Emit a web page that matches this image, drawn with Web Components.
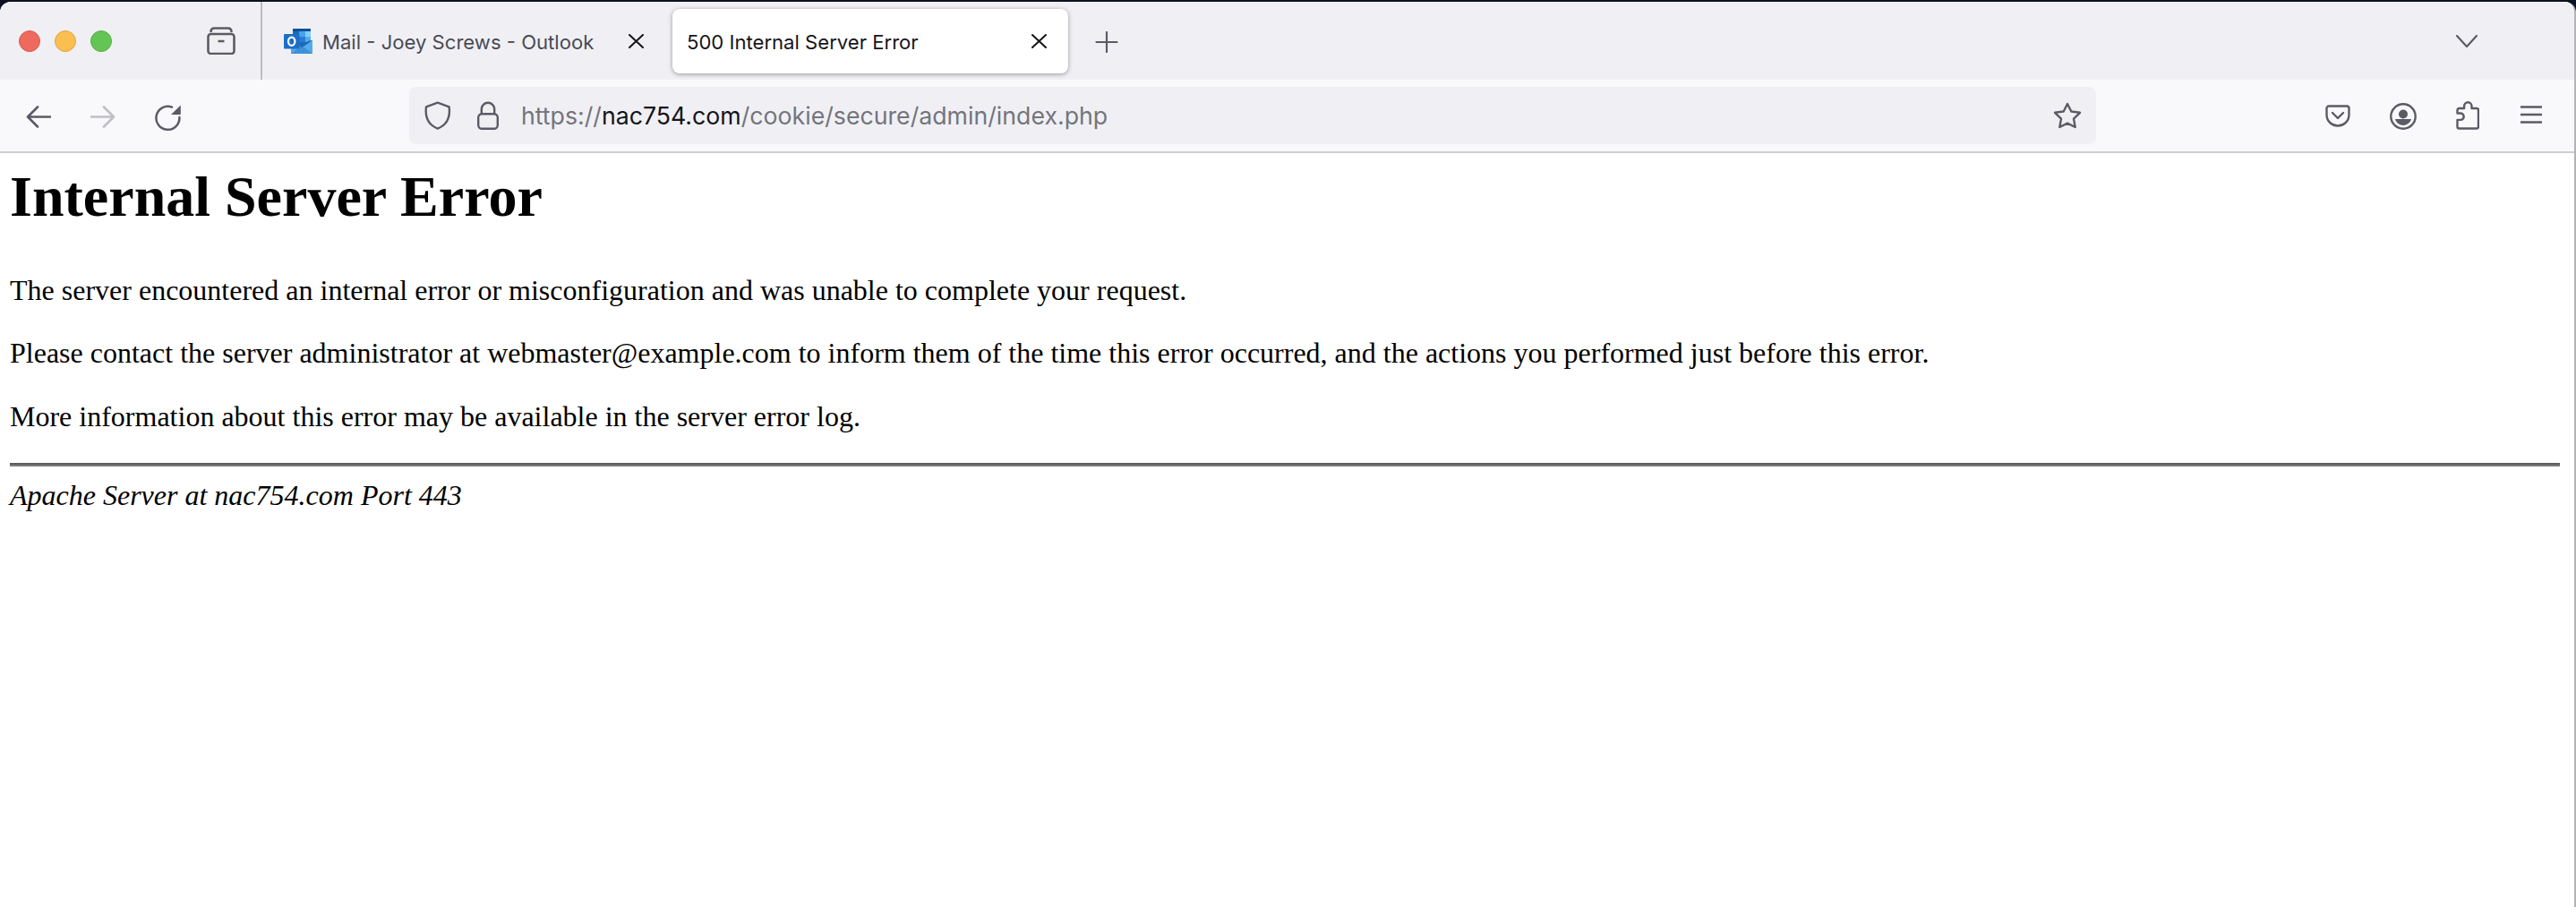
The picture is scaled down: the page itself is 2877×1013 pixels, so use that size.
<!DOCTYPE html>
<html lang="en">
<head>
<meta charset="utf-8">
<title>500 Internal Server Error</title>
<style>
  html, body { margin: 0; padding: 0; height: 100%; background: #0d1020; overflow: hidden; }
</style>
</head>
<body>
<browser-window>
  <tab-strip slot="tabs">
    <traffic-lights></traffic-lights>
    <tool-icon name="view" style="margin-left:106px"></tool-icon>
    <span class="sep" style="display:block;width:2px;height:87px;background:#bcbcc2;margin-left:28px;align-self:flex-end"></span>
    <browser-tab style="margin-left:6px;width:444px">
      <tool-icon slot="favicon" name="outlook"></tool-icon>
      Mail - Joey Screws - Outlook
    </browser-tab>
    <browser-tab active style="margin-left:7.5px;width:442.5px">500 Internal Server Error</browser-tab>
    <tool-icon name="plus" style="margin-left:30px;margin-top:3px"></tool-icon>
    <span style="flex:1"></span>
    <tool-icon name="chevron" style="margin-right:108px"></tool-icon>
  </tab-strip>
  <nav-bar slot="nav">
    <tool-icon name="back" style="margin-left:29px;margin-top:2px"></tool-icon>
    <tool-icon name="forward" style="margin-left:44px;margin-top:2px"></tool-icon>
    <tool-icon name="reload" style="margin-left:44px;margin-top:4px"></tool-icon>
    <url-bar scheme="https://" host="nac754.com" path="/cookie/secure/admin/index.php"></url-bar>
    <tool-icon name="pocket" style="margin-left:256px"></tool-icon>
    <tool-icon name="account" style="margin-left:44px;margin-top:2px"></tool-icon>
    <tool-icon name="extensions" style="margin-left:44px"></tool-icon>
    <tool-icon name="menu" style="margin-left:46px;margin-top:-2px"></tool-icon>
  </nav-bar>
  <server-error slot="page">
    <span slot="title">Internal Server Error</span>
    <p>The server encountered an internal error or misconfiguration and was unable to complete your request.</p>
    <p>Please contact the server administrator at webmaster@example.com to inform them of the time this error occurred, and the actions you performed just before this error.</p>
    <p>More information about this error may be available in the server error log.</p>
    <span slot="signature">Apache Server at nac754.com Port 443</span>
  </server-error>
</browser-window>

<script>
  const STROKE = "#5b5b66";

  // each icon is drawn in its own pixel box: [width, height, markup]
  const ICONS = {
    view: [32, 31, `
      <g fill="none" stroke="${STROKE}" stroke-width="2.6" stroke-linecap="round" stroke-linejoin="round">
        <path d="M4.5 5Q5 1.5 8 1.5H24Q27 1.5 27.5 5"/>
        <rect x="1.5" y="8" width="29" height="22" rx="3"/>
        <path d="M12.5 16H19.5" stroke-linecap="butt"/>
      </g>`],
    outlook: [32, 28, `
      <rect x="10" y="0" width="20" height="3" fill="#0f4f9a"/>
      <rect x="10" y="3" width="7" height="6" fill="#1a68bd"/>
      <rect x="17" y="3" width="7" height="6" fill="#4aa3e6"/>
      <rect x="24" y="3" width="6" height="6" fill="#7fd0f6"/>
      <rect x="10" y="9" width="7" height="6" fill="#15589f"/>
      <rect x="17" y="9" width="7" height="6" fill="#2a7cd3"/>
      <rect x="24" y="9" width="6" height="6" fill="#4fb0ec"/>
      <rect x="10" y="15" width="20" height="5" fill="#1c6cc0"/>
      <path d="M8 14L20 21L32 13V28H8Z" fill="#55aae8"/>
      <path d="M8 28L20 19L32 28Z" fill="#3d92da"/>
      <path d="M32 13L20 21L16 18.5L30 13Z" fill="#1e6bb8"/>
      <rect x="0" y="6" width="17.5" height="16.5" rx="1" fill="#1d6fc6"/>
      <ellipse cx="8.7" cy="14.2" rx="3.7" ry="4.6" fill="none" stroke="#fff" stroke-width="2.2"/>`],
    close: [17, 16, `
      <path d="M1 1L16 15M16 1L1 15" stroke="#15141a" stroke-width="2" fill="none" stroke-linecap="round"/>`],
    plus: [26, 24, `
      <path d="M13 1V23M1.5 12H24.5" stroke="${STROKE}" stroke-width="2.2" fill="none" stroke-linecap="round"/>`],
    chevron: [24, 14, `
      <path d="M1 1L12 13L23 1" stroke="${STROKE}" stroke-width="2.2" fill="none" stroke-linecap="round" stroke-linejoin="round"/>`],
    back: [28, 25, `
      <path d="M27 12.5H2.5M13 1.5L2 12.5L13 23.5" stroke="${STROKE}" stroke-width="2.6" fill="none" stroke-linecap="round" stroke-linejoin="round"/>`],
    forward: [28, 25, `
      <path d="M1 12.5H25.5M15 1.5L26 12.5L15 23.5" stroke="#bfbfc5" stroke-width="2.6" fill="none" stroke-linecap="round" stroke-linejoin="round"/>`],
    reload: [30, 29, `
      <path d="M19 2.6A13 13 0 1 0 27.4 14" stroke="${STROKE}" stroke-width="2.5" fill="none" stroke-linecap="round"/>
      <path d="M28.8 .6V11H18Z" fill="${STROKE}"/>`],
    shield: [30, 32, `
      <path d="M14.8 1.6L27.6 6.4C29.2 19 24 27 14.8 30.6C5.6 27 .4 19 2 6.4Z" stroke="${STROKE}" stroke-width="2.4" fill="none" stroke-linejoin="round"/>`],
    lock: [24, 32, `
      <g stroke="${STROKE}" stroke-width="2.4" fill="none">
        <rect x="1.2" y="14.2" width="21.6" height="16.6" rx="4"/>
        <path d="M4.8 14V9A7.2 7.2 0 0 1 19.2 9V14"/>
      </g>`],
    star: [32, 30, `
      <path d="M16 2L20.3 10.5L30 11.8L23 18.6L24.7 28L16 23.6L7.3 28L9 18.6L2 11.8L11.7 10.5Z" stroke="${STROKE}" stroke-width="2.4" fill="none" stroke-linejoin="round"/>`],
    pocket: [28, 25, `
      <g stroke="${STROKE}" stroke-width="2.4" fill="none" stroke-linecap="round" stroke-linejoin="round">
        <path d="M1.5 4A2.5 2.5 0 0 1 4 1.5H24A2.5 2.5 0 0 1 26.5 4V11C26.5 19 20 23.5 14 23.5C8 23.5 1.5 19 1.5 11Z"/>
        <path d="M8 9L14 15L20 9"/>
      </g>`],
    account: [30, 30, `
      <circle cx="15" cy="15" r="13.7" stroke="${STROKE}" stroke-width="2.4" fill="none"/>
      <circle cx="15" cy="12.5" r="5" fill="${STROKE}"/>
      <path d="M6 18H24C23 22 19 25 15 25C11 25 7 22 6 18Z" fill="${STROKE}"/>`],
    extensions: [26, 32, `
      <path d="M3.5 30.5H23A2 2 0 0 0 25 28.5V10A2 2 0 0 0 23 8H17.5V5.5A4.2 4.2 0 0 0 9.1 5.5V8H3.5A2 2 0 0 0 1.5 10V13.5H5A3.7 3.7 0 0 1 5 20.9H1.5V28.5A2 2 0 0 0 3.5 30.5Z" stroke="${STROKE}" stroke-width="2.4" fill="none" stroke-linejoin="round"/>`],
    menu: [24, 20, `
      <path d="M0 1.5H24M0 10H24M0 18.5H24" stroke="${STROKE}" stroke-width="2.6" fill="none"/>`],
  };

  class ToolIcon extends HTMLElement {
    connectedCallback() {
      if (this.shadowRoot) return;
      const [w, h, body] = ICONS[this.getAttribute("name")];
      this.attachShadow({ mode: "open" }).innerHTML = `
        <style>
          :host { display: block; flex: none; line-height: 0; }
          svg { display: block; }
        </style>
        <svg width="${w}" height="${h}" viewBox="0 0 ${w} ${h}">${body}</svg>`;
    }
  }

  class BrowserWindow extends HTMLElement {
    constructor() {
      super();
      this.attachShadow({ mode: "open" }).innerHTML = `
        <style>
          :host {
            display: flex;
            flex-direction: column;
            height: 1011px;
            margin-top: 2px;
            border-right: 2px solid #b4b4b6;
            border-radius: 12px 12px 0 0;
            overflow: hidden;
            background: #fff;
          }
        </style>
        <slot name="tabs"></slot>
        <slot name="nav"></slot>
        <slot name="page"></slot>`;
    }
  }

  class TabStrip extends HTMLElement {
    constructor() {
      super();
      this.attachShadow({ mode: "open" }).innerHTML = `
        <style>
          :host {
            display: flex;
            align-items: center;
            height: 87px;
            background: #f0f0f4;
          }
        </style>
        <slot></slot>`;
    }
  }

  class TrafficLights extends HTMLElement {
    constructor() {
      super();
      this.attachShadow({ mode: "open" }).innerHTML = `
        <style>
          :host { display: flex; gap: 16px; margin-left: 21px; margin-top: 0; flex: none; }
          i { display: block; width: 24px; height: 24px; border-radius: 50%; box-sizing: border-box; border: 1px solid; }
          .r { background: #ee6a5f; border-color: #d9594f; }
          .y { background: #f9bf4f; border-color: #e0a53f; }
          .g { background: #62c554; border-color: #53ae46; }
        </style>
        <i class="r"></i><i class="y"></i><i class="g"></i>`;
    }
  }

  class BrowserTab extends HTMLElement {
    connectedCallback() {
      if (this.shadowRoot) return;
      this.attachShadow({ mode: "open" }).innerHTML = `
        <style>
          :host {
            display: flex;
            align-items: center;
            box-sizing: border-box;
            flex: none;
            height: 72px;
            padding: 0 24px 0 18px;
            border-radius: 8px;
            font: 22.1px Inter, "Noto Sans", sans-serif;
            color: #4a4a55;
          }
          :host([active]) {
            background: #fff;
            color: #15141a;
            box-shadow: 0 1px 5px rgba(0, 0, 0, .38);
          }
          :host([active]) .label { margin-left: -1.5px; }
          .label { flex: 1; white-space: nowrap; overflow: hidden; margin-top: 2px; }
          ::slotted([slot="favicon"]) { margin-right: 11px; }
        </style>
        <slot name="favicon"></slot>
        <span class="label"><slot></slot></span>
        <tool-icon name="close"></tool-icon>`;
    }
  }

  class NavBar extends HTMLElement {
    constructor() {
      super();
      this.attachShadow({ mode: "open" }).innerHTML = `
        <style>
          :host {
            display: flex;
            align-items: center;
            height: 80px;
            background: #f9f9fb;
            border-bottom: 2px solid #cfcfd1;
          }
        </style>
        <slot></slot>`;
    }
  }

  class UrlBar extends HTMLElement {
    connectedCallback() {
      if (this.shadowRoot) return;
      const scheme = this.getAttribute("scheme");
      const host = this.getAttribute("host");
      const path = this.getAttribute("path");
      this.attachShadow({ mode: "open" }).innerHTML = `
        <style>
          :host {
            display: flex;
            align-items: center;
            box-sizing: border-box;
            flex: none;
            width: 1884px;
            height: 64px;
            margin-left: 254px;
            padding: 0 16px 0 17px;
            border-radius: 8px;
            background: #f0f0f4;
            font: 26.7px Inter, "Noto Sans", sans-serif;
            color: #74747d;
          }
          .address { flex: 1; margin-left: 25px; white-space: nowrap; }
          b { font-weight: 400; color: #15141a; }
          .shield { margin-right: 29px; }
        </style>
        <tool-icon name="shield" class="shield"></tool-icon>
        <tool-icon name="lock"></tool-icon>
        <span class="address">${scheme}<b>${host}</b>${path}</span>
        <tool-icon name="star"></tool-icon>`;
    }
  }

  class ServerError extends HTMLElement {
    constructor() {
      super();
      this.attachShadow({ mode: "open" }).innerHTML = `
        <style>
          :host {
            display: block;
            padding: 0 16px 0 11px;
            font-family: "Liberation Serif", "Times New Roman", serif;
            font-size: 32px;
            line-height: 37px;
            color: #000;
            background: #fff;
          }
          h1 { margin: 12px 0 0; font-size: 64px; line-height: 74px; font-weight: 700; }
          .body { margin-top: 48.7px; }
          ::slotted(p) { margin: 0 0 33.5px; }
          hr { box-sizing: border-box; height: 4px; margin: 3px 0 14.2px; border: 0; border-top: 2px solid #5c5c5c; background: #7c7c7c; }
          address { font-style: italic; }
        </style>
        <h1><slot name="title"></slot></h1>
        <div class="body"><slot></slot></div>
        <hr>
        <address><slot name="signature"></slot></address>`;
    }
  }

  customElements.define("tool-icon", ToolIcon);
  customElements.define("browser-window", BrowserWindow);
  customElements.define("tab-strip", TabStrip);
  customElements.define("traffic-lights", TrafficLights);
  customElements.define("browser-tab", BrowserTab);
  customElements.define("nav-bar", NavBar);
  customElements.define("url-bar", UrlBar);
  customElements.define("server-error", ServerError);
</script>
</body>
</html>
